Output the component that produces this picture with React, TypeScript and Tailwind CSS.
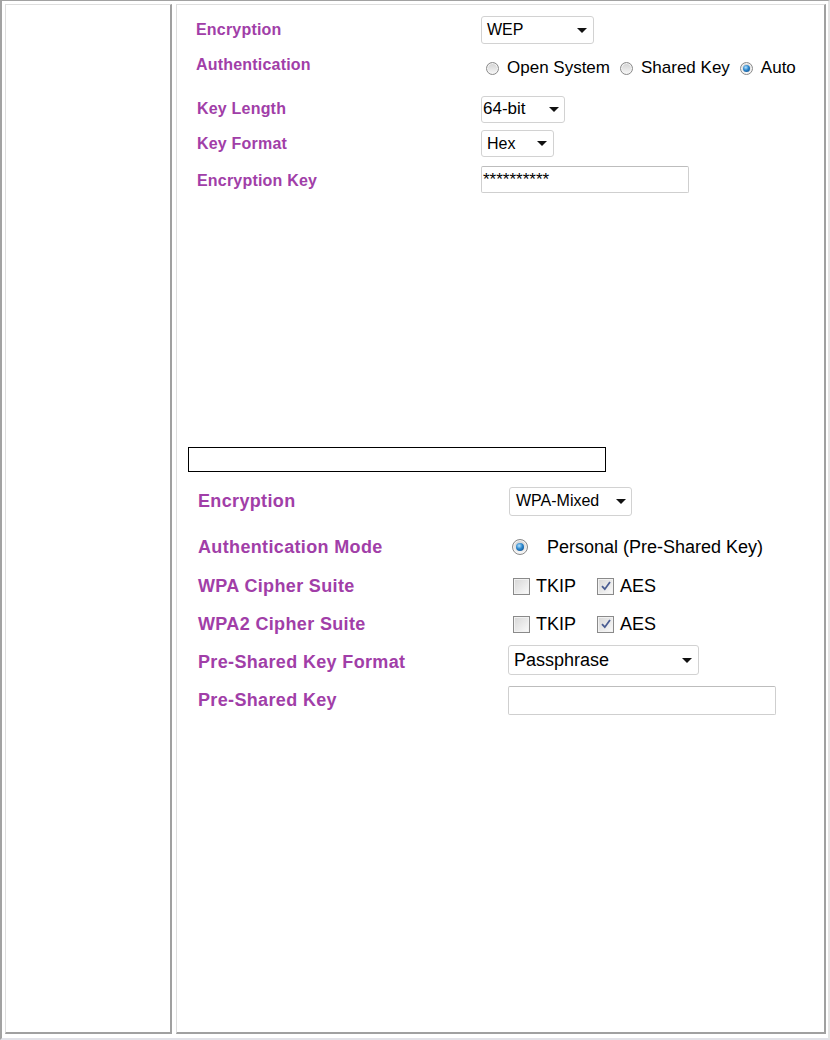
import React from "react";

const LABEL1 = "font-bold text-[16px] tracking-[0.2px] text-[#a13ea8] leading-none";
const LABEL2 = "font-bold text-[18px] tracking-[0.35px] text-[#a13ea8] leading-none";

function Caret() {
  return (
    <svg width="10" height="5" viewBox="0 0 10 5" className="shrink-0">
      <path d="M0 0 L10 0 L5 5 Z" fill="#111" />
    </svg>
  );
}

function Radio({ checked, size, dot }: { checked?: boolean; size: string; dot?: string }) {
  return (
    <span
      className={
        size +
        " shrink-0 rounded-full border border-[#8a8a8a] bg-[linear-gradient(180deg,#d2d2d2,#f7f7f7)] flex items-center justify-center shadow-[inset_0_0_0_1px_#f4f4f4]"
      }
    >
      {checked ? (
        <span className={(dot || "w-[7px] h-[7px]") + " rounded-full bg-[radial-gradient(circle_at_40%_35%,#b5e2ff_0%,#2a86cc_45%,#0c3f78_100%)]"} />
      ) : null}
    </span>
  );
}

function Check({ checked }: { checked?: boolean }) {
  return (
    <span className="w-[17px] h-[17px] shrink-0 border border-[#8a8a8a] bg-[linear-gradient(135deg,#d6d6d6,#fbfbfb)] flex items-center justify-center shadow-[inset_0_0_0_1px_#f2f2f2]">
      {checked ? (
        <svg width="12" height="12" viewBox="0 0 12 12">
          <path d="M2 6.2 L4.8 9.2 L10 2" fill="none" stroke="#4a5d92" strokeWidth="1.8" />
        </svg>
      ) : null}
    </span>
  );
}

export default function App() {
  return (
    <div className="w-[830px] h-[1040px] bg-white font-['Liberation_Sans',Arial,sans-serif] text-black">
      <div className="w-[830px] h-[1040px] border-t border-t-[#a2a2a2] border-l-2 border-l-[#a2a2a2] border-r-2 border-r-[#e4e4e4] border-b-2 border-b-[#e2e2e8] pl-[3px] pt-[3px] pr-[2px] pb-[4px] flex gap-[4px]">
        {/* left cell */}
        <div className="w-[167px] h-full border-t border-l border-t-[#dedede] border-l-[#dedede] border-r-2 border-b-2 border-r-[#a0a0a0] border-b-[#a0a0a0]" />
        {/* right cell */}
        <div className="w-[650px] h-full border-t border-l border-t-[#dedede] border-l-[#dedede] border-r-2 border-b-2 border-r-[#a0a0a0] border-b-[#a0a0a0]">
          {/* Section 1: WEP */}
          <div className="pt-[7px] flex flex-col">
            <div className="flex items-center h-[36px]">
              <div className={"w-[304px] pl-[19px] " + LABEL1}>Encryption</div>
              <div className="w-[113px] h-[28px] border border-[#d2d2d2] rounded-[3px] flex items-center justify-between pl-[5px] pr-[6px] text-[16px]">
                <span>WEP</span>
                <Caret />
              </div>
            </div>
            <div className="flex items-center h-[40px]">
              <div className={"w-[304px] pl-[19px] mb-[6px] " + LABEL1}>Authentication</div>
              <div className="flex items-center pl-[5px] text-[17px]">
                <Radio size="w-[13px] h-[13px]" />
                <span className="ml-[8px]">Open System</span>
                <span className="ml-[10px]"><Radio size="w-[13px] h-[13px]" /></span>
                <span className="ml-[8px]">Shared Key</span>
                <span className="ml-[10px]"><Radio size="w-[13px] h-[13px]" checked /></span>
                <span className="ml-[8px]">Auto</span>
              </div>
            </div>
            <div className="flex items-center h-[42px]">
              <div className={"w-[304px] pl-[20px] " + LABEL1}>Key Length</div>
              <div className="w-[84px] h-[27px] border border-[#d2d2d2] rounded-[3px] flex items-center justify-between pl-[1px] pr-[5px] text-[17px]">
                <span>64-bit</span>
                <Caret />
              </div>
            </div>
            <div className="flex items-center h-[27px]">
              <div className={"w-[304px] pl-[20px] " + LABEL1}>Key Format</div>
              <div className="w-[73px] h-[27px] border border-[#d2d2d2] rounded-[3px] flex items-center justify-between pl-[5px] pr-[6px] text-[16px]">
                <span>Hex</span>
                <Caret />
              </div>
            </div>
            <div className="flex items-center h-[45px]">
              <div className={"w-[304px] pl-[20px] mt-[3px] " + LABEL1}>Encryption Key</div>
              <div className="w-[208px] h-[27px] border border-[#cfcfcf] border-t-[#bdbdbd] rounded-[2px] flex items-center pl-[1px] text-[17px]">
                <span>**********</span>
              </div>
            </div>
          </div>

          {/* Section 2: WPA */}
          <div className="mt-[245px] ml-[11px] w-[418px] h-[25px] border border-black" />
          <div className="flex flex-col">
            <div className="flex items-center h-[38px] mt-[10px]">
              <div className={"w-[331px] pl-[21px] " + LABEL2}>Encryption</div>
              <div className="ml-[1px] w-[123px] h-[29px] border border-[#d2d2d2] rounded-[3px] flex items-center justify-between pl-[6px] pr-[5px] text-[16px]">
                <span>WPA-Mixed</span>
                <Caret />
              </div>
            </div>
            <div className="flex items-center h-[38px] mt-[8px]">
              <div className={"w-[331px] pl-[21px] " + LABEL2}>Authentication Mode</div>
              <div className="flex items-center ml-[4px] text-[18px]">
                <Radio size="w-[16px] h-[16px]" dot="w-[8px] h-[8px]" checked />
                <span className="ml-[19px]">Personal (Pre-Shared Key)</span>
              </div>
            </div>
            <div className="flex items-center h-[38px] mt-[1px]">
              <div className={"w-[331px] pl-[21px] " + LABEL2}>WPA Cipher Suite</div>
              <div className="flex items-center ml-[5px] text-[18px]">
                <Check />
                <span className="ml-[6px]">TKIP</span>
                <span className="ml-[21px]"><Check checked /></span>
                <span className="ml-[6px]">AES</span>
              </div>
            </div>
            <div className="flex items-center h-[38px]">
              <div className={"w-[331px] pl-[21px] " + LABEL2}>WPA2 Cipher Suite</div>
              <div className="flex items-center ml-[5px] text-[18px]">
                <Check />
                <span className="ml-[6px]">TKIP</span>
                <span className="ml-[21px]"><Check checked /></span>
                <span className="ml-[6px]">AES</span>
              </div>
            </div>
            <div className="flex items-center h-[38px]">
              <div className={"w-[331px] pl-[21px] " + LABEL2}>Pre-Shared Key Format</div>
              <div className="mb-[4px] w-[191px] h-[30px] border border-[#d2d2d2] rounded-[3px] flex items-center justify-between pl-[5px] pr-[6px] text-[18px]">
                <span>Passphrase</span>
                <Caret />
              </div>
            </div>
            <div className="flex items-center h-[38px]">
              <div className={"w-[331px] pl-[21px] " + LABEL2}>Pre-Shared Key</div>
              <div className="w-[268px] h-[29px] border border-[#cfcfcf] border-t-[#bdbdbd] rounded-[2px]" />
            </div>
          </div>
        </div>
      </div>
    </div>
  );
}
